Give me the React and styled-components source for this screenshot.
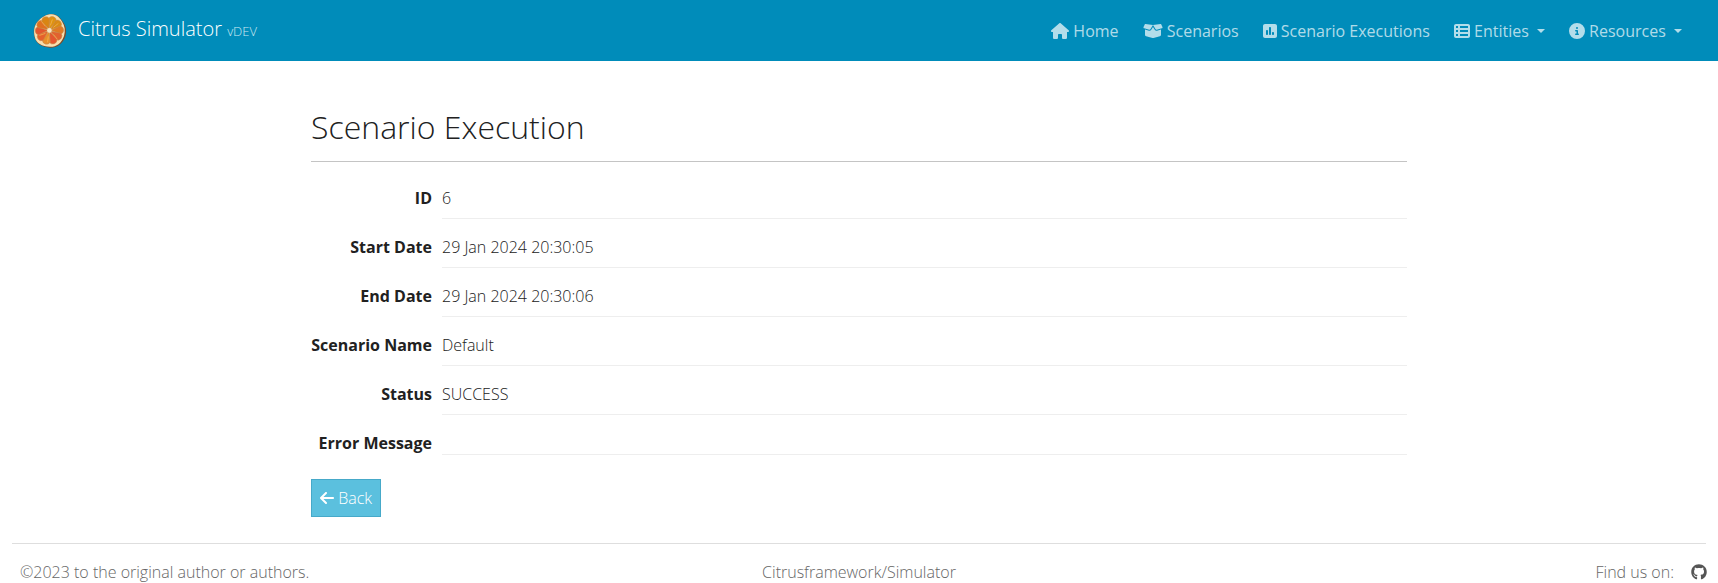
import React from 'react';
import styled, { createGlobalStyle } from 'styled-components';
import {
  FaHouse, FaBoxOpen, FaSquarePollVertical, FaTableList, FaCircleInfo, FaArrowLeft, FaGithub,
} from 'react-icons/fa6';

const GlobalStyle = createGlobalStyle`
  *, *::before, *::after { box-sizing: border-box; }
  html, body { margin: 0; background: #fff; overflow: hidden; }
  body {
    font-family: 'Open Sans', sans-serif;
    font-size: 16px;
    font-weight: 300;
    line-height: 24px;
    color: #212121;
  }
`;

const Navbar = styled.nav`
  display: flex;
  align-items: center;
  justify-content: space-between;
  height: 61px;
  padding: 0 24px 0 32px;
  background: #008cba;
`;

const Brand = styled.a`
  display: flex;
  align-items: center;
  color: #fff;
  font-size: 20px;
  line-height: 30px;
`;

const Logo = styled.svg`
  width: 36px;
  height: 36px;
  margin-right: 10px;
`;

const BrandText = styled.span`
  padding-bottom: 2px;
`;

const Version = styled.small`
  font-size: 13px;
  color: #cce8f1;
`;

const NavList = styled.ul`
  display: flex;
  margin: 0;
  padding: 0;
  list-style: none;
`;

const NavLink = styled.a`
  display: block;
  padding: 8px 12px;
  color: rgba(255, 255, 255, 0.7);
  font-weight: 500;
  white-space: nowrap;

  svg {
    width: ${({ $iconWidth }) => $iconWidth}px;
    height: 16px;
    vertical-align: -2px;
  }
`;

const Caret = styled.span`
  display: inline-block;
  margin-left: 4px;
  vertical-align: 4px;
  border-top: 4.8px solid;
  border-right: 4.8px solid transparent;
  border-left: 4.8px solid transparent;
`;

const Main = styled.main`
  width: 1096px;
  margin: 0 auto;
  padding-top: 47px;
`;

const Title = styled.h2`
  margin: 0;
  font-size: 32px;
  font-weight: 300;
  line-height: 38px;
`;

const Divider = styled.hr`
  margin: 15px 0 16px;
  border: 0;
  border-top: 1px solid #c4c4c4;
`;

const Details = styled.dl`
  display: grid;
  grid-template-columns: 121px 1fr;
  column-gap: 10px;
  margin: 0;
`;

const Term = styled.dt`
  height: 49px;
  padding-top: 8px;
  font-weight: 700;
  text-align: right;
  white-space: nowrap;
`;

const Value = styled.dd`
  height: ${({ $empty }) => ($empty ? 32 : 41)}px;
  margin: 0;
  padding-top: 8px;
  border-bottom: 1px solid #eee;
`;

const BackButton = styled.button`
  display: block;
  width: 70px;
  height: 38px;
  margin-top: 7px;
  padding: 0;
  border: 1px solid #46a9c9;
  background: #5bc0de;
  color: #fff;
  font: inherit;
  white-space: nowrap;

  svg {
    width: 14px;
    height: 16px;
    vertical-align: -2px;
  }
`;

const Footer = styled.footer`
  display: grid;
  grid-template-columns: 1fr auto 1fr;
  margin: 26px 12px 0;
  padding: 16px 0 0;
  border-top: 1px solid #dedede;
  color: #666;
`;

const Copyright = styled.span`
  padding-left: 8px;
`;

const FindUs = styled.div`
  display: flex;
  justify-content: flex-end;
  align-items: center;
  gap: 17px;
  margin-right: -1px;

  svg {
    width: 16px;
    height: 16px;
    color: #555;
  }
`;

const navItems = [
  { label: 'Home', icon: FaHouse, width: 18 },
  { label: 'Scenarios', icon: FaBoxOpen, width: 20 },
  { label: 'Scenario Executions', icon: FaSquarePollVertical, width: 14 },
  { label: 'Entities', icon: FaTableList, width: 16, menu: true },
  { label: 'Resources', icon: FaCircleInfo, width: 16, menu: true },
];

const details = [
  ['ID', '6'],
  ['Start Date', '29 Jan 2024 20:30:05'],
  ['End Date', '29 Jan 2024 20:30:06'],
  ['Scenario Name', 'Default'],
  ['Status', 'SUCCESS'],
  ['Error Message', ''],
];

const segmentColors = ['#df930f', '#d98a14', '#e07a24', '#e2622f', '#e4562f', '#e8902a', '#e5602c', '#e2562f', '#e0701f', '#d98512'];

const CitrusLogo = () => (
  <Logo viewBox="0 0 36 36" aria-hidden="true">
    <path d="M20 1C25 1.5 28 4 31 9C34 13 35 18 33.5 23C31 31 25 35 18 34.7C10 34 4 31 2.5 24C1 18 2 12 6 8C10 4 14 1 20 1Z" fill="#7d4d2a" />
    <path d="M20 1.3C24.5 1.8 27 4 30 8.5C33 13 33.5 18 32 23C29.5 30.5 24 34 18 33.8C10 33.5 4 30 2.8 24C1.3 18 2.3 12 6 8.3C10 4 14 1.3 20 1.3Z" fill="#f6dfb0" />
    <g transform="translate(17.4 17.4)">
      {segmentColors.map((color, i) => (
        <path
          key={i}
          d="M0-1.5L-4-10.8Q-3.5-14 0-14.2Q3.5-14 4-10.8Z"
          fill={color}
          stroke="#c98a4a"
          strokeWidth="0.6"
          transform={`rotate(${i * 36 + 16})`}
        />
      ))}
      <path d="M3-11L1-5M9-7L4-3M-8-9L-4-4M-10 5L-4 3M-2 12L-1 6M8 9L4 4" stroke="#f3b050" strokeWidth="0.8" />
      <circle r="2.3" fill="#f5e5c4" />
    </g>
  </Logo>
);

export default function App() {
  return (
    <>
      <GlobalStyle />
      <Navbar>
        <Brand>
          <CitrusLogo />
          <BrandText>Citrus Simulator <Version>vDEV</Version></BrandText>
        </Brand>
        <NavList>
          {navItems.map(({ label, icon: Icon, width, menu }) => (
            <li key={label}>
              <NavLink $iconWidth={width}>
                <Icon /> {label} {menu && <Caret />}
              </NavLink>
            </li>
          ))}
        </NavList>
      </Navbar>
      <Main>
        <Title>Scenario Execution</Title>
        <Divider />
        <Details>
          {details.map(([term, value]) => (
            <React.Fragment key={term}>
              <Term>{term}</Term>
              <Value $empty={!value}>{value}</Value>
            </React.Fragment>
          ))}
        </Details>
        <BackButton><FaArrowLeft /> Back</BackButton>
      </Main>
      <Footer>
        <Copyright>©2023 to the original author or authors.</Copyright>
        <span>Citrusframework/Simulator</span>
        <FindUs>Find us on: <FaGithub /></FindUs>
      </Footer>
    </>
  );
}
